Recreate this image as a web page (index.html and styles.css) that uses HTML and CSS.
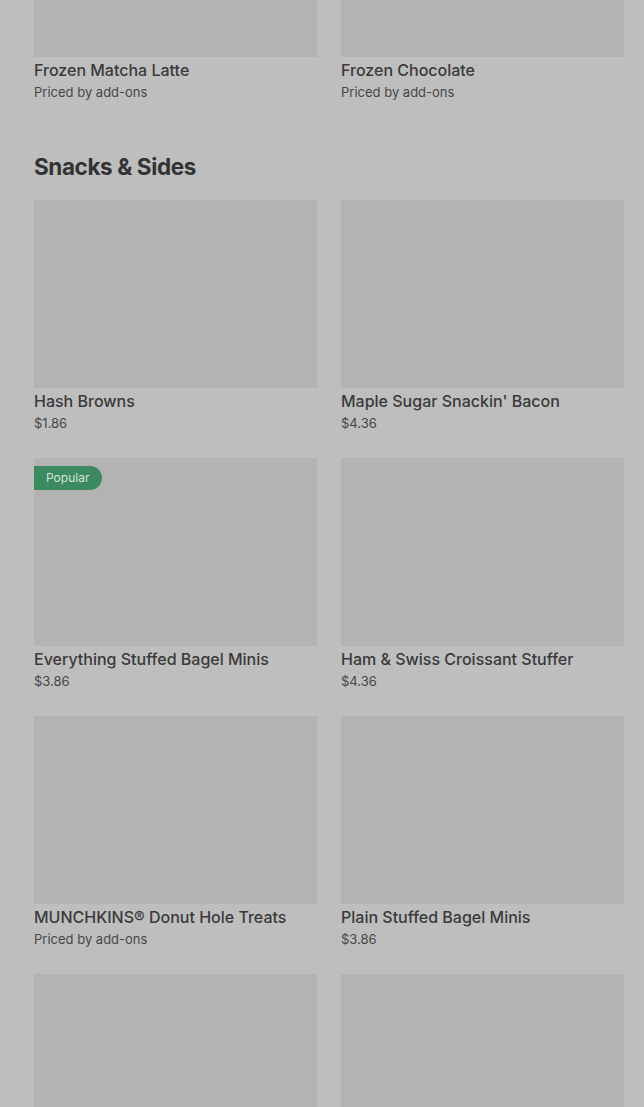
FILE: index.html
```html
<!DOCTYPE html>
<html lang="en">
<head>
<meta charset="utf-8">
<title>Menu</title>
<link rel="stylesheet" href="styles.css">
</head>
<body>
<main class="menu">
  <section class="section">
    <div class="grid">
      <article class="item">
        <div class="thumb"></div>
        <h3 class="name">Frozen Matcha Latte</h3>
        <p class="price">Priced by add-ons</p>
      </article>
      <article class="item">
        <div class="thumb"></div>
        <h3 class="name">Frozen Chocolate</h3>
        <p class="price">Priced by add-ons</p>
      </article>
    </div>
  </section>

  <section class="section">
    <h2 class="section-title">Snacks &amp; Sides</h2>
    <div class="grid">
      <article class="item">
        <div class="thumb"></div>
        <h3 class="name">Hash Browns</h3>
        <p class="price">$1.86</p>
      </article>
      <article class="item">
        <div class="thumb"></div>
        <h3 class="name">Maple Sugar Snackin' Bacon</h3>
        <p class="price">$4.36</p>
      </article>
      <article class="item">
        <div class="thumb"><span class="badge">Popular</span></div>
        <h3 class="name">Everything Stuffed Bagel Minis</h3>
        <p class="price">$3.86</p>
      </article>
      <article class="item">
        <div class="thumb"></div>
        <h3 class="name">Ham &amp; Swiss Croissant Stuffer</h3>
        <p class="price">$4.36</p>
      </article>
      <article class="item">
        <div class="thumb"></div>
        <h3 class="name">MUNCHKINS® Donut Hole Treats</h3>
        <p class="price">Priced by add-ons</p>
      </article>
      <article class="item">
        <div class="thumb"></div>
        <h3 class="name">Plain Stuffed Bagel Minis</h3>
        <p class="price">$3.86</p>
      </article>
      <article class="item">
        <div class="thumb"></div>
        <h3 class="name"></h3>
        <p class="price"></p>
      </article>
      <article class="item">
        <div class="thumb"></div>
        <h3 class="name"></h3>
        <p class="price"></p>
      </article>
    </div>
  </section>
</main>
</body>
</html>
```

FILE: styles.css
```css
html, body {
  margin: 0;
  padding: 0;
}
body {
  background: #bebebe;
  font-family: Inter, "Liberation Sans", sans-serif;
  color: #3a3a3a;
  overflow: hidden;
  height: 1107px;
}
.menu {
  padding: 0 20px 0 34px;
  margin-top: -131px;
}
.section + .section {
  margin-top: 48px;
}
.section-title {
  margin: 0 0 17px;
  font-size: 22.5px;
  line-height: 32px;
  font-weight: 700;
  letter-spacing: -0.4px;
  color: #333;
}
.grid {
  display: grid;
  grid-template-columns: 283px 283px;
  column-gap: 24px;
  row-gap: 24px;
}
.item {
  margin: 0;
}
.thumb {
  position: relative;
  height: 188px;
  background: #b3b3b3;
}
.badge {
  position: absolute;
  left: 0;
  top: 8px;
  height: 24px;
  padding: 0 13px 0 12px;
  border-radius: 0 12px 12px 0;
  background: #3c8a5f;
  color: #d4e6da;
  font-size: 12px;
  line-height: 24px;
}
.name {
  margin: 1px 0 0;
  font-size: 16px;
  line-height: 24px;
  font-weight: 500;
  color: #3a3a3a;
  min-height: 24px;
}
.price {
  margin: 0;
  font-size: 13px;
  line-height: 21px;
  color: #474747;
  min-height: 21px;
}
```
